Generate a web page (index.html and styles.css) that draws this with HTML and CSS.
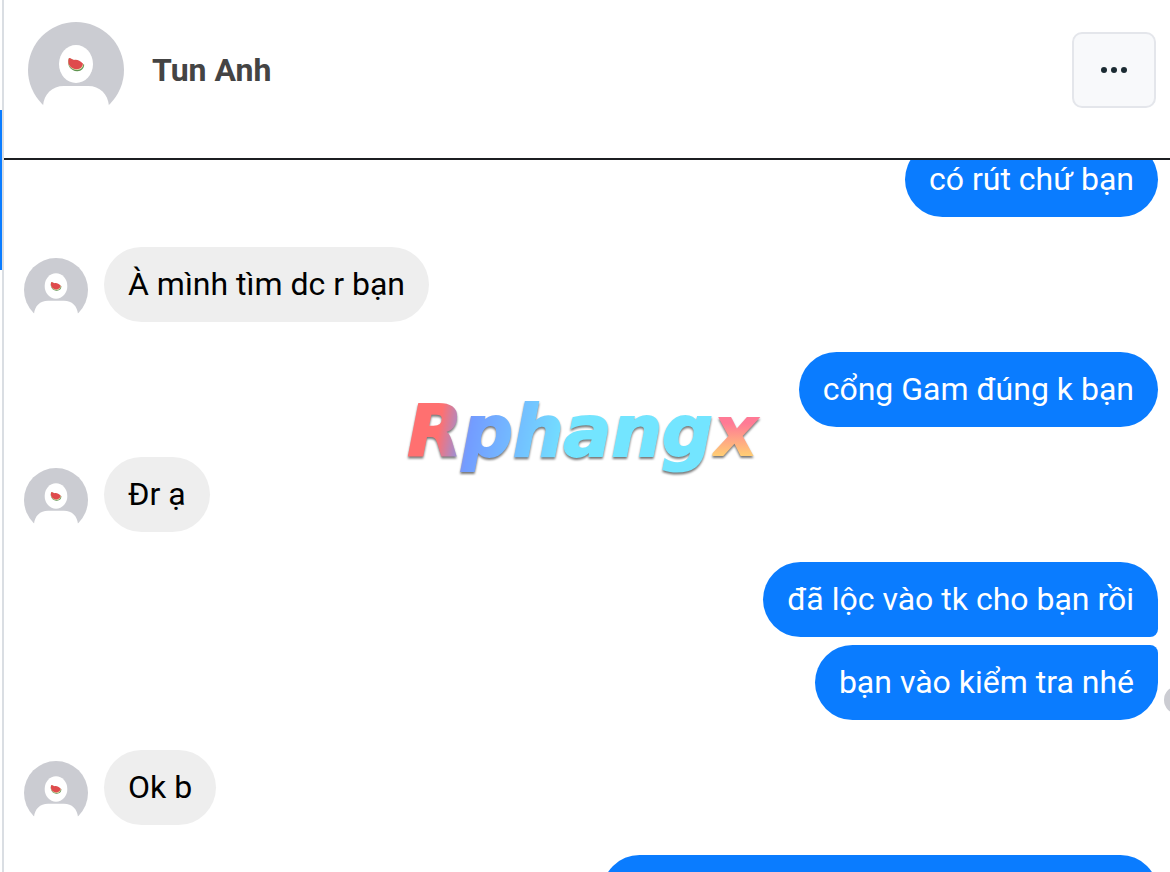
FILE: index.html
```html
<!DOCTYPE html>
<html lang="vi">
<head>
    <meta charset="UTF-8">
    <meta name="viewport" content="width=device-width, initial-scale=1.0">
    <title>Tun Anh</title>
    <link rel="stylesheet" href="styles.css">
</head>
<body>

    <!-- Shared avatar drawing -->
    <svg class="sprite" aria-hidden="true">
        <symbol id="avatar" viewBox="0 0 96 96">
            <circle cx="48" cy="48" r="48" fill="#cbccd2"/>
            <ellipse cx="48" cy="42" rx="17" ry="19" fill="#fff"/>
            <path d="M15 84 C16 72 24 64 36 64 H60 C72 64 80 72 81 84 L84 98 H12 Z" fill="#fff"/>
            <path d="M41 36 C38 43 43 49.500 49.500 49.200 C53.500 49 56 46.500 56.200 42.500 Z" fill="#5f9450"/>
            <path d="M41 36 C38.500 43 43 48.200 49.500 48 C53 47.800 55 45.500 55.500 42 Z" fill="#ecdcb4"/>
            <path d="M41 36 C38.500 42 43 47.300 49 47.200 C52 47 54.500 45 55 41.700 C52 38 48 37 46 38 C44 37.500 42.500 36 41 36 Z" fill="#df4b4d"/>
        </symbol>
    </svg>

    <div class="rail">
        <div class="rail-active"></div>
    </div>

    <main class="chat">
        <header class="chat-header">
            <svg class="avatar avatar-large"><use href="#avatar"/></svg>
            <h1 class="chat-name">Tun Anh</h1>
            <button class="more" type="button" aria-label="More">
                <svg width="28" height="8" viewBox="0 0 28 8" fill="#1c2b33">
                    <circle cx="4" cy="4" r="3"/>
                    <circle cx="14" cy="4" r="3"/>
                    <circle cx="24" cy="4" r="3"/>
                </svg>
            </button>
        </header>

        <div class="messages">
            <div class="thread">
                <div class="row sent">
                    <p class="bubble">có rút chứ bạn</p>
                </div>
                <div class="row">
                    <svg class="avatar"><use href="#avatar"/></svg>
                    <p class="bubble">À mình tìm dc r bạn</p>
                </div>
                <div class="row sent">
                    <p class="bubble">cổng Gam đúng k bạn</p>
                </div>
                <div class="row">
                    <svg class="avatar"><use href="#avatar"/></svg>
                    <p class="bubble">Đr ạ</p>
                </div>
                <div class="row sent group">
                    <p class="bubble first">đã lộc vào tk cho bạn rồi</p>
                    <p class="bubble last">bạn vào kiểm tra nhé</p>
                    <span class="seen"></span>
                </div>
                <div class="row">
                    <svg class="avatar"><use href="#avatar"/></svg>
                    <p class="bubble">Ok b</p>
                </div>
                <div class="row sent">
                    <p class="bubble long"></p>
                </div>
            </div>
        </div>
    </main>

    <div class="watermark"><span class="mark-main">Rphang</span><span class="mark-x">x</span></div>

</body>
</html>
```
FILE: styles.css
```css
* {
    box-sizing: border-box;
}

body {
    margin: 0;
    height: 100vh;
    display: flex;
    overflow: hidden;
    position: relative;
    background: #fff;
    font-family: Roboto, "Liberation Sans", sans-serif;
    font-size: 32px;
}

.sprite {
    position: absolute;
    width: 0;
    height: 0;
}

/* Edge of the conversation list */
.rail {
    width: 2px;
    padding-top: 110px;
}

.rail-active {
    height: 160px;
    background: #0a7cff;
}

.chat {
    flex: 1;
    min-width: 0;
    display: flex;
    flex-direction: column;
    border-left: 2px solid #dadee3;
}

.chat-header {
    display: flex;
    align-items: center;
    gap: 28px;
    padding: 22px 14px 40px 24px;
    border-bottom: 2px solid #1c1e21;
}

.chat-name {
    flex: 1;
    margin: 0;
    font-size: 32px;
    line-height: 40px;
    font-weight: 700;
    color: #444;
}

.avatar {
    flex: none;
    width: 64px;
    height: 64px;
}

.avatar-large {
    width: 96px;
    height: 96px;
}

.more {
    display: flex;
    align-items: center;
    justify-content: center;
    width: 84px;
    height: 76px;
    padding: 0;
    border: 2px solid #e4e6eb;
    border-radius: 10px;
    background: #f8f9fb;
    cursor: pointer;
}

.messages {
    flex: 1;
    min-height: 0;
    overflow: hidden;
}

/* Scrolled a little, so the first bubble sits under the header */
.thread {
    display: flex;
    flex-direction: column;
    gap: 30px;
    margin-top: -18px;
    padding: 0 12px 0 20px;
}

.row {
    display: flex;
    align-items: flex-end;
    gap: 16px;
}

.sent {
    justify-content: flex-end;
}

.group {
    position: relative;
    flex-direction: column;
    gap: 8px;
}

.bubble {
    margin: 0;
    min-height: 75px;
    padding: 16px 24px;
    line-height: 43px;
    border-radius: 38px;
    background: #eee;
    color: #000;
}

.sent .bubble {
    background: #0a7cff;
    color: #fff;
}

.bubble.first {
    border-bottom-right-radius: 8px;
}

.bubble.last {
    border-top-right-radius: 8px;
}

.long {
    width: 49%;
}

.seen {
    position: absolute;
    right: -34px;
    bottom: 6px;
    width: 28px;
    height: 28px;
    border-radius: 50%;
    background: #cbccd2;
}

/* Logo over the conversation */
.watermark {
    position: absolute;
    top: 50%;
    left: 50%;
    transform: translate(-50%, -50%);
    padding-bottom: 8px;
    font-family: "DejaVu Sans", sans-serif;
    font-size: 71px;
    line-height: 88px;
    font-weight: 700;
    font-style: italic;
    white-space: nowrap;
    filter: drop-shadow(0 2px 1px #777);
    pointer-events: none;
}

.mark-main,
.mark-x {
    background: linear-gradient(100deg, #ff7070 12%, #739cff 22%, #73e5ff 54%);
    -webkit-background-clip: text;
    background-clip: text;
    color: transparent;
}

.mark-main {
    -webkit-text-stroke: 2px transparent;
}

.mark-x {
    padding-right: 4px;
    background-image: linear-gradient(#ff7a95 40%, #ffcb75 78%);
}
```
